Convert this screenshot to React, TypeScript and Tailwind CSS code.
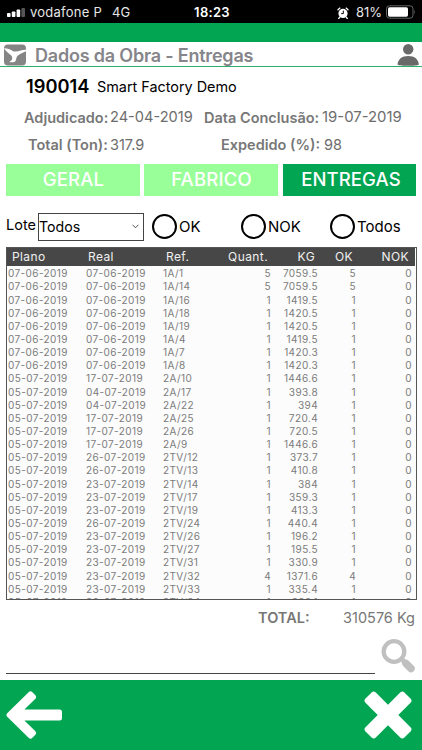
const rows = [
    ['07-06-2019', '07-06-2019', '1A/1', '5', '7059.5', '5', '0'],
    ['07-06-2019', '07-06-2019', '1A/14', '5', '7059.5', '5', '0'],
    ['07-06-2019', '07-06-2019', '1A/16', '1', '1419.5', '1', '0'],
    ['07-06-2019', '07-06-2019', '1A/18', '1', '1420.5', '1', '0'],
    ['07-06-2019', '07-06-2019', '1A/19', '1', '1420.5', '1', '0'],
    ['07-06-2019', '07-06-2019', '1A/4', '1', '1419.5', '1', '0'],
    ['07-06-2019', '07-06-2019', '1A/7', '1', '1420.3', '1', '0'],
    ['07-06-2019', '07-06-2019', '1A/8', '1', '1420.3', '1', '0'],
    ['05-07-2019', '17-07-2019', '2A/10', '1', '1446.6', '1', '0'],
    ['05-07-2019', '04-07-2019', '2A/17', '1', '393.8', '1', '0'],
    ['05-07-2019', '04-07-2019', '2A/22', '1', '394', '1', '0'],
    ['05-07-2019', '17-07-2019', '2A/25', '1', '720.4', '1', '0'],
    ['05-07-2019', '17-07-2019', '2A/26', '1', '720.5', '1', '0'],
    ['05-07-2019', '17-07-2019', '2A/9', '1', '1446.6', '1', '0'],
    ['05-07-2019', '26-07-2019', '2TV/12', '1', '373.7', '1', '0'],
    ['05-07-2019', '26-07-2019', '2TV/13', '1', '410.8', '1', '0'],
    ['05-07-2019', '23-07-2019', '2TV/14', '1', '384', '1', '0'],
    ['05-07-2019', '23-07-2019', '2TV/17', '1', '359.3', '1', '0'],
    ['05-07-2019', '23-07-2019', '2TV/19', '1', '413.3', '1', '0'],
    ['05-07-2019', '26-07-2019', '2TV/24', '1', '440.4', '1', '0'],
    ['05-07-2019', '23-07-2019', '2TV/26', '1', '196.2', '1', '0'],
    ['05-07-2019', '23-07-2019', '2TV/27', '1', '195.5', '1', '0'],
    ['05-07-2019', '23-07-2019', '2TV/31', '1', '330.9', '1', '0'],
    ['05-07-2019', '23-07-2019', '2TV/32', '4', '1371.6', '4', '0'],
    ['05-07-2019', '23-07-2019', '2TV/33', '1', '335.4', '1', '0'],
    ['05-07-2019', '26-07-2019', '2TV/34', '1', '386.1', '1', '0'],
];

const columns = 'grid grid-cols-[76px_78px_57px_56px_47px_38px_56px]';

function StatusBar() {
    return (
        <div className="grid h-[23px] grid-cols-[1fr_auto_1fr] items-center bg-black pt-[2px] text-[13px] text-white">
            <div className="flex items-center pl-[7px]">
                <svg width="18" height="9" viewBox="0 0 18 9" fill="#fff">
                    <rect x="0" y="5" width="3.6" height="4" rx="0.8" />
                    <rect x="4.8" y="3.5" width="3.6" height="5.5" rx="0.8" />
                    <rect x="9.6" y="1.5" width="3.6" height="7.5" rx="0.8" />
                    <rect x="14.4" y="0" width="3.6" height="9" rx="0.8" fill="#555" />
                </svg>
                <span className="ml-[5px] tracking-[0.25px] text-[#e6e6e6]">vodafone P</span>
                <span className="ml-[10px] text-[#e6e6e6]">4G</span>
            </div>
            <span className="pl-[2px] font-semibold tracking-[0.3px]">18:23</span>
            <div className="flex items-center justify-end pr-[6px]">
                <svg width="12" height="12" viewBox="0 0 12 12">
                    <circle cx="6" cy="6.4" r="4.6" fill="#fff" />
                    <path d="M1 2.8 2.9 1.1M11 2.8 9.1 1.1M2.8 10.2 1.7 11.5M9.2 10.2l1.1 1.3" stroke="#fff" strokeWidth="1.3" strokeLinecap="round" />
                    <path d="M6.3 3.6v3H4.2" stroke="#000" fill="none" />
                </svg>
                <span className="ml-[7px] text-[#e6e6e6]">81%</span>
                <svg className="mb-px ml-[4px]" width="30" height="14" viewBox="0 0 30 14">
                    <rect x="0.5" y="0.8" width="26.5" height="12.4" rx="3" fill="none" stroke="#666" />
                    <rect x="2" y="2.3" width="20" height="9.4" rx="1.6" fill="#fff" />
                    <path d="M28.3 4.8q1.6 2.2 0 4.4z" fill="#666" />
                </svg>
            </div>
        </div>
    );
}

function Radio({ label }: { label: string }) {
    return (
        <label className="flex items-center">
            <span className="size-[25px] rounded-full border-2 border-black" />
            <span className="ml-[2px] pt-px">{label}</span>
        </label>
    );
}

export default function App() {
    return (
        <div className="flex h-[750px] w-[422px] flex-col overflow-hidden bg-white font-['Inter',sans-serif] text-black">
            <StatusBar />
            <div className="h-[19px] bg-[#02a552]" />

            {/* Title bar */}
            <header className="flex h-[24px] items-center pt-px pr-[3px] pl-[4px] text-[#85858a]">
                <svg width="22" height="22" viewBox="0 0 22 22">
                    <rect width="22" height="21" y="0.5" rx="4" fill="#858585" />
                    <path d="M0 4.2C3.500 4.400 6.800 5.200 9 7.200c2.500.8 5.200.1 7.600-.7 2-.7 3.800-.9 5.400-.8v1.600c-2.300 1-4.400 2-6.300 3-2.200 1.200-3.300 2.700-3.500 4.600-.2 1.800-1.200 3-3 3.300-1.300.2-2.700.1-3.900-.2 2.200-1.100 3.300-2.800 2.800-5C7.500 10.400 3 9 0 4.200z" fill="#fff" />
                </svg>
                <h1 className="ml-[9px] flex-1 pt-px text-[18px] font-semibold tracking-[-0.2px]">Dados da Obra - Entregas</h1>
                <svg width="22" height="22" viewBox="0 0 22 22" fill="#696969">
                    <circle cx="11.2" cy="5.3" r="5.2" />
                    <path d="M.6 20.800C.6 15.400 5 12 11.200 12s10.600 3.400 10.600 8.800c-3 1.400-18.200 1.400-21.200 0z" />
                </svg>
            </header>
            <div className="mb-px h-px bg-[#2bb06b]" />

            <div className="flex h-[36px] items-center pt-[1px] pl-[26px]">
                <span className="w-[71px] text-[18.3px] font-semibold">190014</span>
                <span className="pt-[1px] text-[14.4px]">Smart Factory Demo</span>
            </div>

            {/* Work details */}
            <div className="grid h-[54px] grid-cols-[110px_94px_118px_1fr] grid-rows-2 items-center text-[14.5px] whitespace-nowrap text-[#6d6d6d]">
                <span className="pl-[24px] font-semibold text-[#777]">Adjudicado:</span>
                <span className="text-[14.6px]">24-04-2019</span>
                <span className="font-semibold text-[#777]">Data Conclusão:</span>
                <span className="text-[14.9px]">19-07-2019</span>
                <span className="pl-[28px] font-semibold text-[#777]">Total (Ton):</span>
                <span>317.9</span>
                <span className="pl-[17px] font-semibold text-[#777]">Expedido (%):</span>
                <span className="pl-[2px]">98</span>
            </div>

            {/* Tabs */}
            <div className="mt-[6px] grid h-[32px] grid-cols-[134px_134px_134px] gap-x-[4px] pl-[6px] text-[18.5px] font-medium text-white">
                <button className="bg-[#99ff99] pl-px tracking-[0.2px]">GERAL</button>
                <button className="bg-[#99ff99] pl-px tracking-[0.2px]">FABRICO</button>
                <button className="ml-px bg-[#02a552] pl-[3px] tracking-[0.1px]">ENTREGAS</button>
            </div>

            {/* Filters */}
            <div className="flex h-[51px] items-center pt-[10px] pl-[6px] text-[15px]">
                <span className="w-[32px] pb-[4px] text-[14.5px]">Lote</span>
                <div className="flex h-[28px] w-[106px] items-center justify-between border border-[#444] pr-[4px]">
                    <span className="pt-px text-[14.2px]">Todos</span>
                    <svg width="7" height="5" viewBox="0 0 7 5" fill="none" stroke="#555">
                        <path d="m.6.8 2.900 3 2.900-3" />
                    </svg>
                </div>
                <div className="ml-[8px] grid grid-cols-[89px_89px_auto]">
                    <Radio label="OK" />
                    <Radio label="NOK" />
                    <Radio label="Todos" />
                </div>
            </div>

            {/* Deliveries table */}
            <div className="mx-[6px] h-[353px] w-[411px] shrink-0 overflow-hidden border border-[#555] bg-[#fcfcfc]">
                <div className={`${columns} h-[18.3px] w-[408px] items-center bg-[#474747] text-[12px] tracking-[0.4px] text-[#f0f0f0]`}>
                    <span className="pl-[5px]">Plano</span>
                    <span className="pl-[5px]">Real</span>
                    <span className="pl-[5px]">Ref.</span>
                    <span className="pr-[6px] text-right">Quant.</span>
                    <span className="pr-[6px] text-right">KG</span>
                    <span className="pr-[6px] text-right">OK</span>
                    <span className="pr-[6px] text-right">NOK</span>
                </div>
                {rows.map((row) => (
                    <div key={row[2]} className={`${columns} h-[13.15px] w-[408px] items-center text-[10px] tracking-[0.4px] text-[#7b7b7b]`}>
                        <span className="pl-[1px]">{row[0]}</span>
                        <span className="pl-[3px]">{row[1]}</span>
                        <span className="pl-[2px]">{row[2]}</span>
                        <span className="pr-[3px] text-right">{row[3]}</span>
                        <span className="pr-[3px] text-right">{row[4]}</span>
                        <span className="pr-[3px] text-right">{row[5]}</span>
                        <span className="pr-[3px] text-right">{row[6]}</span>
                    </div>
                ))}
            </div>

            <div className="flex h-[35px] items-center justify-end pr-[7px] text-[14.5px] text-[#777]">
                <span className="w-[85px] font-semibold">TOTAL:</span>
                <span>310576 Kg</span>
            </div>

            {/* Search */}
            <div className="flex h-[45px] pl-[6px]">
                <div className="h-[39px] w-[369px] border-b-[1.5px] border-b-[#444]" />
                <svg className="mt-[3px] ml-[6px]" width="35" height="35" viewBox="0 0 35 35" fill="none" stroke="#c0c0c0" strokeLinecap="round">
                    <circle cx="13" cy="13.500" r="10.300" strokeWidth="4.300" />
                    <path d="m22.500 23 2 2" strokeWidth="5" />
                    <path d="m25 25.500 5 5" strokeWidth="7.500" />
                </svg>
            </div>

            <footer className="flex h-[70px] items-center justify-between bg-[#02a552] pr-[10px] pl-[6px]">
                <svg width="56" height="48" viewBox="0 0 56 48" fill="#fff">
                    <path d="M1.2 22.3 22.6 1.200q1.900-1.800 3.800 0l3 3q1.500 1.800 0 3.600L18.400 18.500H53.500q2.500 0 2.500 2.500v6q0 2.500-2.500 2.500H18.400L29.400 40.200q1.500 1.800 0 3.600l-3 3q-1.900 1.800-3.800 0L1.200 25.700q-1.500-1.700 0-3.400z" />
                </svg>
                <svg width="48" height="48" viewBox="0 0 48 48" fill="#fff">
                    <path d="m24 13.700 12.200-12.200q2.100-2.100 4.200 0l6.100 6.100q2.100 2.100 0 4.200L34.300 24l12.200 12.200q2.100 2.100 0 4.200l-6.100 6.100q-2.100 2.100-4.200 0L24 34.300 11.800 46.500q-2.100 2.100-4.200 0l-6.100-6.100q-2.100-2.100 0-4.200L13.700 24 1.500 11.800q-2.100-2.100 0-4.200l6.100-6.100q2.100-2.100 4.200 0z" />
                </svg>
            </footer>
        </div>
    );
}
